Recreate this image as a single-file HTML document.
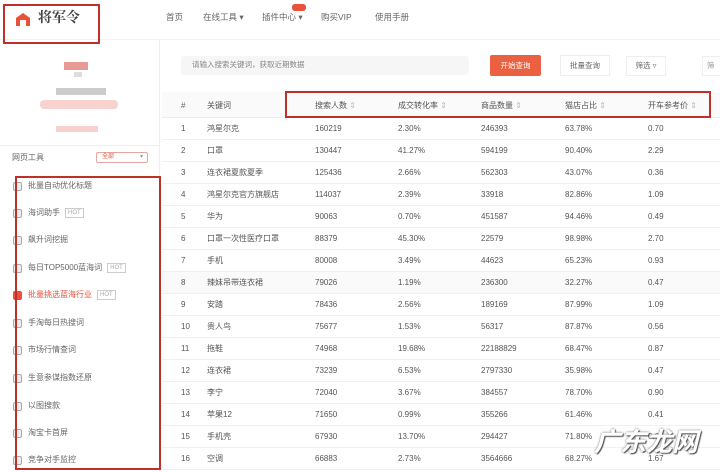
<!DOCTYPE html><html><head><meta charset="utf-8"><style>
*{margin:0;padding:0;box-sizing:border-box}
body{width:720px;height:472px;overflow:hidden;background:#fff;font-family:"Liberation Sans","Noto Sans CJK SC",sans-serif;color:#555;font-size:8px;position:relative;line-height:10px}
.a{position:absolute;white-space:nowrap}
.red{position:absolute;border:2px solid #c0302a}
.nav{top:12px;font-size:8.5px;color:#666}
.side .a{font-size:8px;color:#666}
.ic{position:absolute;width:9px;height:9px;border:1px solid #aaa;border-radius:2px;background:#eee}
.hot{display:inline-block;border:1px solid #ccc;color:#aaa;font-size:6px;padding:0 2px;margin-left:5px;line-height:8px;vertical-align:middle}
.row{position:absolute;left:162px;width:558px;height:22px;border-bottom:1px solid #f0f0f0}
.row span{position:absolute;top:6px;font-size:8px;color:#555;line-height:10px}
</style></head><body>
<div class="a" style="left:0;top:0;width:720px;height:40px;border-bottom:1px solid #f3f3f3"></div>
<svg class="a" style="left:15px;top:12px" width="16" height="14" viewBox="0 0 16 14"><path d="M1 14V6L8 1l7 5v8h-4V8H5v6z" fill="#e8513a"/></svg>
<div class="a" style="left:38px;top:9px;font-size:14px;line-height:16px;font-weight:bold;color:#444;font-family:'Noto Serif CJK SC',serif">将军令</div>
<div class="red" style="left:3px;top:4px;width:97px;height:40px"></div>
<div class="a nav" style="left:166px">首页</div>
<div class="a nav" style="left:203px">在线工具 ▾</div>
<div class="a nav" style="left:262px">插件中心 ▾</div>
<div class="a" style="left:292px;top:4px;width:14px;height:7px;background:#e8513a;border-radius:3px"></div>
<div class="a nav" style="left:321px">购买VIP</div>
<div class="a nav" style="left:375px">使用手册</div>
<div class="a" style="left:0;top:40px;width:160px;height:432px;border-right:1px solid #eee"></div>
<div class="a" style="left:64px;top:62px;width:24px;height:8px;background:#e89a95"></div>
<div class="a" style="left:74px;top:72px;width:8px;height:5px;background:#ddd"></div>
<div class="a" style="left:56px;top:88px;width:50px;height:7px;background:#ccc"></div>
<div class="a" style="left:40px;top:100px;width:78px;height:9px;background:#f7d3d0;border-radius:4px"></div>
<div class="a" style="left:56px;top:126px;width:42px;height:6px;background:#f7cfcc"></div>
<div class="a" style="left:0;top:145px;width:160px;border-top:1px solid #eee"></div>
<div class="a" style="left:12px;top:153px;font-size:8px;color:#666">网页工具</div>
<div class="a" style="left:96px;top:152px;width:52px;height:11px;border:1px solid #e8a49e;border-radius:2px;font-size:6px;color:#e8513a;padding-left:5px;line-height:9px">全部<span style="float:right;margin-right:4px;color:#999">▾</span></div>
<div class="side">
<div class="ic" style="left:13px;top:182px"></div><div class="a" style="left:28px;top:181px">批量自动优化标题</div>
<div class="ic" style="left:13px;top:209px"></div><div class="a" style="left:28px;top:208px">海词助手<span class="hot">HOT</span></div>
<div class="ic" style="left:13px;top:236px"></div><div class="a" style="left:28px;top:235px">飙升词挖掘</div>
<div class="ic" style="left:13px;top:264px"></div><div class="a" style="left:28px;top:263px">每日TOP5000蓝海词<span class="hot">HOT</span></div>
<div class="ic" style="left:13px;top:291px;background:#e8513a;border-color:#e8513a"></div><div class="a" style="left:28px;top:290px;color:#e8513a">批量挑选蓝海行业<span class="hot">HOT</span></div>
<div class="ic" style="left:13px;top:319px"></div><div class="a" style="left:28px;top:318px">手淘每日热搜词</div>
<div class="ic" style="left:13px;top:346px"></div><div class="a" style="left:28px;top:345px">市场行情查词</div>
<div class="ic" style="left:13px;top:374px"></div><div class="a" style="left:28px;top:373px">生意参谋指数还原</div>
<div class="ic" style="left:13px;top:402px"></div><div class="a" style="left:28px;top:401px">以图搜款</div>
<div class="ic" style="left:13px;top:429px"></div><div class="a" style="left:28px;top:428px">淘宝卡首屏</div>
<div class="ic" style="left:13px;top:456px"></div><div class="a" style="left:28px;top:455px">竞争对手监控</div>
</div>
<div class="red" style="left:15px;top:176px;width:146px;height:294px"></div>
<div class="a" style="left:181px;top:56px;width:288px;height:19px;background:#f6f6f6;border-radius:3px;font-size:7.5px;color:#888;padding:4px 0 0 11px">请输入搜索关键词，获取近期数据</div>
<div class="a" style="left:490px;top:55px;width:51px;height:21px;background:#ec6042;border-radius:2px;color:#fff;font-size:7.5px;text-align:center;line-height:21px">开始查询</div>
<div class="a" style="left:560px;top:55px;width:50px;height:21px;border:1px solid #eee;font-size:7.5px;color:#666;text-align:center;line-height:19px">批量查询</div>
<div class="a" style="left:626px;top:56px;width:40px;height:20px;border:1px solid #eee;font-size:7.5px;color:#666;text-align:center;line-height:18px">筛选 ▿</div>
<div class="a" style="left:702px;top:56px;width:20px;height:20px;border:1px solid #eee;font-size:7.5px;color:#999;line-height:18px;padding-left:4px">筛</div>
<div class="a" style="left:162px;top:92px;width:558px;height:26px;background:#fafafa;border-bottom:1px solid #eee"></div>
<div class="a" style="left:181px;top:101px;color:#666">#</div>
<div class="a" style="left:207px;top:101px;color:#555">关键词</div>
<div class="a" style="left:315px;top:101px">搜索人数 <span style="color:#bbb">⇕</span></div>
<div class="a" style="left:398px;top:101px">成交转化率 <span style="color:#bbb">⇕</span></div>
<div class="a" style="left:481px;top:101px">商品数量 <span style="color:#bbb">⇕</span></div>
<div class="a" style="left:565px;top:101px">猫店占比 <span style="color:#bbb">⇕</span></div>
<div class="a" style="left:648px;top:101px">开车参考价 <span style="color:#bbb">⇕</span></div>
<div class="red" style="left:285px;top:91px;width:426px;height:27px"></div>
<div class="row" style="top:118px"><span style="left:19px">1</span><span style="left:45px">鸿星尔克</span><span style="left:153px">160219</span><span style="left:236px">2.30%</span><span style="left:319px">246393</span><span style="left:403px">63.78%</span><span style="left:486px">0.70</span></div>
<div class="row" style="top:140px"><span style="left:19px">2</span><span style="left:45px">口罩</span><span style="left:153px">130447</span><span style="left:236px">41.27%</span><span style="left:319px">594199</span><span style="left:403px">90.40%</span><span style="left:486px">2.29</span></div>
<div class="row" style="top:162px"><span style="left:19px">3</span><span style="left:45px">连衣裙夏款夏季</span><span style="left:153px">125436</span><span style="left:236px">2.66%</span><span style="left:319px">562303</span><span style="left:403px">43.07%</span><span style="left:486px">0.36</span></div>
<div class="row" style="top:184px"><span style="left:19px">4</span><span style="left:45px">鸿星尔克官方旗舰店</span><span style="left:153px">114037</span><span style="left:236px">2.39%</span><span style="left:319px">33918</span><span style="left:403px">82.86%</span><span style="left:486px">1.09</span></div>
<div class="row" style="top:206px"><span style="left:19px">5</span><span style="left:45px">华为</span><span style="left:153px">90063</span><span style="left:236px">0.70%</span><span style="left:319px">451587</span><span style="left:403px">94.46%</span><span style="left:486px">0.49</span></div>
<div class="row" style="top:228px"><span style="left:19px">6</span><span style="left:45px">口罩一次性医疗口罩</span><span style="left:153px">88379</span><span style="left:236px">45.30%</span><span style="left:319px">22579</span><span style="left:403px">98.98%</span><span style="left:486px">2.70</span></div>
<div class="row" style="top:250px"><span style="left:19px">7</span><span style="left:45px">手机</span><span style="left:153px">80008</span><span style="left:236px">3.49%</span><span style="left:319px">44623</span><span style="left:403px">65.23%</span><span style="left:486px">0.93</span></div>
<div class="row" style="top:272px;background:#fafafa"><span style="left:19px">8</span><span style="left:45px">辣妹吊带连衣裙</span><span style="left:153px">79026</span><span style="left:236px">1.19%</span><span style="left:319px">236300</span><span style="left:403px">32.27%</span><span style="left:486px">0.47</span></div>
<div class="row" style="top:294px"><span style="left:19px">9</span><span style="left:45px">安踏</span><span style="left:153px">78436</span><span style="left:236px">2.56%</span><span style="left:319px">189169</span><span style="left:403px">87.99%</span><span style="left:486px">1.09</span></div>
<div class="row" style="top:316px"><span style="left:19px">10</span><span style="left:45px">贵人鸟</span><span style="left:153px">75677</span><span style="left:236px">1.53%</span><span style="left:319px">56317</span><span style="left:403px">87.87%</span><span style="left:486px">0.56</span></div>
<div class="row" style="top:338px"><span style="left:19px">11</span><span style="left:45px">拖鞋</span><span style="left:153px">74968</span><span style="left:236px">19.68%</span><span style="left:319px">22188829</span><span style="left:403px">68.47%</span><span style="left:486px">0.87</span></div>
<div class="row" style="top:360px"><span style="left:19px">12</span><span style="left:45px">连衣裙</span><span style="left:153px">73239</span><span style="left:236px">6.53%</span><span style="left:319px">2797330</span><span style="left:403px">35.98%</span><span style="left:486px">0.47</span></div>
<div class="row" style="top:382px"><span style="left:19px">13</span><span style="left:45px">李宁</span><span style="left:153px">72040</span><span style="left:236px">3.67%</span><span style="left:319px">384557</span><span style="left:403px">78.70%</span><span style="left:486px">0.90</span></div>
<div class="row" style="top:404px"><span style="left:19px">14</span><span style="left:45px">苹果12</span><span style="left:153px">71650</span><span style="left:236px">0.99%</span><span style="left:319px">355266</span><span style="left:403px">61.46%</span><span style="left:486px">0.41</span></div>
<div class="row" style="top:426px"><span style="left:19px">15</span><span style="left:45px">手机壳</span><span style="left:153px">67930</span><span style="left:236px">13.70%</span><span style="left:319px">294427</span><span style="left:403px">71.80%</span><span style="left:486px">0.64</span></div>
<div class="row" style="top:448px"><span style="left:19px">16</span><span style="left:45px">空调</span><span style="left:153px">66883</span><span style="left:236px">2.73%</span><span style="left:319px">3564666</span><span style="left:403px">68.27%</span><span style="left:486px">1.67</span></div>
<div class="a" style="left:594px;top:426px;font-size:26px;line-height:32px;font-weight:bold;color:#fff;text-shadow:0 0 2px #666,1px 1px 1px #444;font-style:italic">广东龙网</div>
</body></html>
